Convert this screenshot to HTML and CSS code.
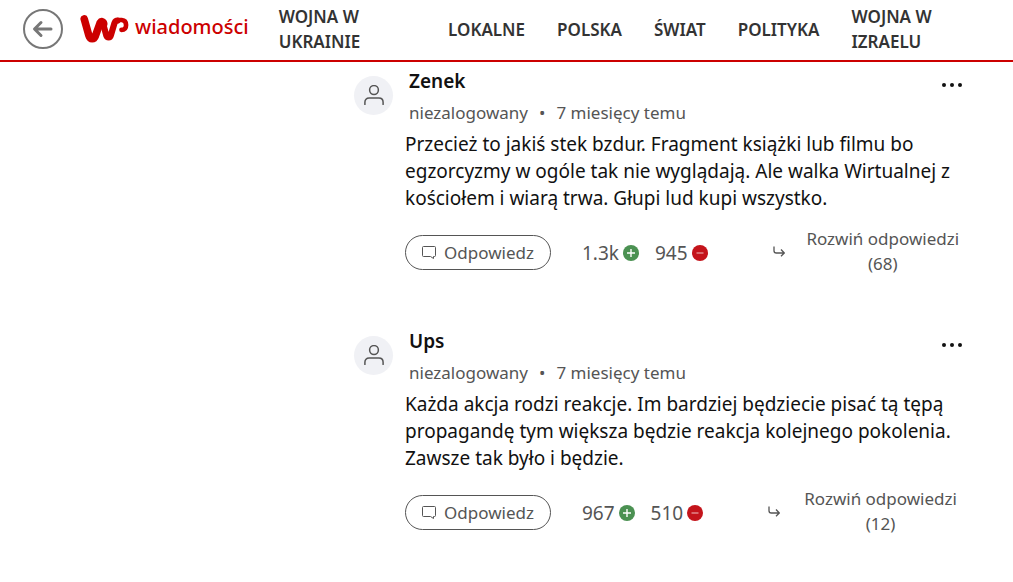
FILE: index.html
```html
<!DOCTYPE html>
<html lang="pl">
<head>
    <meta charset="UTF-8">
    <meta name="viewport" content="width=device-width, initial-scale=1.0">
    <title>WP Wiadomości - komentarze</title>
    <link rel="stylesheet" href="styles.css">
</head>
<body>
    <!-- Ikony -->
    <svg class="sprite" aria-hidden="true">
        <symbol id="user" viewBox="0 0 20 20">
            <circle cx="10" cy="5" r="4.4"/>
            <path d="M.9 19.5v-2.2c0-2.6 1.6-4.3 4.2-4.3h9.8c2.6 0 4.2 1.7 4.2 4.3v2.2"/>
        </symbol>
        <symbol id="bubble" viewBox="0 0 14 13">
            <path d="M1.500.500h11q1 0 1 1v8q0 1-1 1h-1v2l-3-2h-7q-1 0-1-1v-8q0-1 1-1z"/>
        </symbol>
        <symbol id="reply" viewBox="0 0 12 11">
            <path d="M1 .5v4.2c0 1.5.8 2.3 2.3 2.3h7.9M8 3.5L11.3 7 8 10.2"/>
        </symbol>
        <symbol id="plus" viewBox="0 0 16 16">
            <circle cx="8" cy="8" r="8" fill="#4b9152"/>
            <path d="M8 4v8M4 8h8" stroke="#fff" stroke-width="1.4"/>
        </symbol>
        <symbol id="minus" viewBox="0 0 16 16">
            <circle cx="8" cy="8" r="8" fill="#c4141b"/>
            <path d="M4.5 8h7" stroke="#e79a9d" stroke-width="1.3"/>
        </symbol>
    </svg>

    <header class="header">
        <button class="back" type="button" aria-label="Wróć">
            <svg viewBox="0 0 40 40" width="40" height="40">
                <circle cx="20" cy="20" r="19"/>
                <path d="M28 20H12M18 13.5L11.5 20l6.5 6.5"/>
            </svg>
        </button>
        <a class="logo" href="#">
            <svg viewBox="240 46 147 85" width="49" height="28" aria-hidden="true">
                <path d="M252 58L266 108Q269 118 276 118Q283 118 286 109L300 70Q303 65 306 66Q310 67 311 72" stroke-width="23"/>
                <path d="M308 68L319 108Q321 114 326 114Q331 114 333 107L344 70Q347 63 353 63" stroke-width="19"/>
                <path d="M353 61H366Q379 62 379 76Q379 91 365 91" stroke-width="14"/>
            </svg>
            <span>wiadomości</span>
        </a>
        <nav class="nav">
            <a href="#">Wojna w Ukrainie</a>
            <a href="#">Lokalne</a>
            <a href="#">Polska</a>
            <a href="#">Świat</a>
            <a href="#">Polityka</a>
            <a href="#">Wojna w Izraelu</a>
        </nav>
    </header>

    <main class="comments">
        <article class="comment">
            <div class="avatar"><svg class="icon-user"><use href="#user"/></svg></div>
            <div class="comment-main">
                <div class="comment-top">
                    <h2>Zenek</h2>
                    <button class="more" type="button" aria-label="Więcej"><i></i><i></i><i></i></button>
                </div>
                <p class="meta"><span>niezalogowany</span><span>•</span><span>7 miesięcy temu</span></p>
                <p class="text">Przecież to jakiś stek bzdur. Fragment książki lub filmu bo egzorcyzmy w ogóle tak nie wyglądają. Ale walka Wirtualnej z kościołem i wiarą trwa. Głupi lud kupi wszystko.</p>
                <div class="actions">
                    <button class="answer" type="button"><svg class="icon-bubble"><use href="#bubble"/></svg>Odpowiedz</button>
                    <div class="votes">
                        <button class="vote" type="button">1.3k<svg class="icon-vote"><use href="#plus"/></svg></button>
                        <button class="vote" type="button">945<svg class="icon-vote"><use href="#minus"/></svg></button>
                    </div>
                    <button class="expand" type="button"><svg class="icon-reply"><use href="#reply"/></svg><span>Rozwiń odpowiedzi (68)</span></button>
                </div>
            </div>
        </article>

        <article class="comment">
            <div class="avatar"><svg class="icon-user"><use href="#user"/></svg></div>
            <div class="comment-main">
                <div class="comment-top">
                    <h2>Ups</h2>
                    <button class="more" type="button" aria-label="Więcej"><i></i><i></i><i></i></button>
                </div>
                <p class="meta"><span>niezalogowany</span><span>•</span><span>7 miesięcy temu</span></p>
                <p class="text">Każda akcja rodzi reakcje. Im bardziej będziecie pisać tą tępą propagandę tym większa będzie reakcja kolejnego pokolenia. Zawsze tak było i będzie.</p>
                <div class="actions">
                    <button class="answer" type="button"><svg class="icon-bubble"><use href="#bubble"/></svg>Odpowiedz</button>
                    <div class="votes">
                        <button class="vote" type="button">967<svg class="icon-vote"><use href="#plus"/></svg></button>
                        <button class="vote" type="button">510<svg class="icon-vote"><use href="#minus"/></svg></button>
                    </div>
                    <button class="expand" type="button"><svg class="icon-reply"><use href="#reply"/></svg><span>Rozwiń odpowiedzi (12)</span></button>
                </div>
            </div>
        </article>
    </main>
</body>
</html>
```

FILE: styles.css
```css
* {
    box-sizing: border-box;
}

body {
    margin: 0;
    font-family: "Noto Sans", sans-serif;
    font-size: 17px;
    line-height: 25px;
    color: #111;
    background: #fff;
}

button {
    padding: 0;
    border: 0;
    background: none;
    font: inherit;
    color: inherit;
    cursor: pointer;
}

h2,
p {
    margin: 0;
}

svg {
    display: block;
    flex: none;
    fill: none;
}

.sprite {
    position: absolute;
    width: 0;
    height: 0;
}

/* Nagłówek */
.header {
    display: flex;
    align-items: center;
    padding: 4px 34px 6px 23px;
    border-bottom: 2px solid #c00;
}

.back svg {
    stroke: #777;
    stroke-width: 2;
    stroke-linecap: round;
    stroke-linejoin: round;
}

.back path {
    stroke-width: 3;
}

.logo {
    display: flex;
    align-items: center;
    gap: 6px;
    margin: 0 30px 0 17px;
    color: #c00;
    font-size: 20px;
    font-weight: 500;
    text-decoration: none;
}

.logo svg {
    stroke: #c00;
    stroke-linecap: round;
    stroke-linejoin: round;
}

.logo span {
    padding-bottom: 6px;
}

.nav {
    flex: 1;
    display: flex;
    align-items: center;
    gap: 32px;
}

.nav a {
    color: #333;
    font-weight: 600;
    text-decoration: none;
    text-transform: uppercase;
}

/* Komentarze */
.comments {
    max-width: 611px;
    margin-left: auto;
    margin-right: 48px;
    padding-top: 6px;
}

.comment {
    display: flex;
    gap: 12px;
    margin-bottom: 52px;
}

.avatar {
    display: flex;
    flex: none;
    align-items: center;
    justify-content: center;
    width: 39px;
    height: 39px;
    margin-top: 8px;
    border-radius: 50%;
    background: #f0f1f5;
}

.icon-user {
    width: 20px;
    height: 20px;
    margin-bottom: 2px;
    stroke: #555;
    stroke-width: 1.5;
    stroke-linecap: round;
}

.comment-main {
    flex: 1;
}

.comment-top {
    display: flex;
    align-items: center;
    justify-content: space-between;
    padding-left: 4px;
}

.comment-top h2 {
    font-size: 19px;
    font-weight: 600;
    line-height: 26px;
}

.more {
    display: flex;
    gap: 4px;
    padding: 8px 3px 0 0;
}

.more i {
    width: 4px;
    height: 4px;
    border-radius: 50%;
    background: #111;
}

.meta {
    display: flex;
    gap: 11px;
    padding: 6px 0 6px 4px;
    color: #555;
}

.text {
    font-size: 19px;
    line-height: 27px;
}

.actions {
    display: flex;
    align-items: center;
    margin-top: 14px;
    color: #555;
}

.answer {
    display: flex;
    align-items: center;
    gap: 8px;
    margin-top: 2px;
    padding: 4px 16px;
    border: 1px solid #555;
    border-radius: 18px;
}

.icon-bubble {
    width: 14px;
    height: 13px;
    stroke: #555;
}

.votes {
    display: flex;
    gap: 16px;
    margin: 4px 0 0 31px;
    font-size: 19px;
}

.vote {
    display: flex;
    align-items: center;
    gap: 4px;
}

.icon-vote {
    width: 16px;
    height: 16px;
}

.expand {
    flex: 1;
    display: flex;
    align-items: center;
    justify-content: space-between;
    gap: 16px;
    margin-left: 65px;
}

.expand span {
    flex: 1;
}

.icon-reply {
    width: 12px;
    height: 11px;
    stroke: #555;
    stroke-width: 1.3;
}
```
